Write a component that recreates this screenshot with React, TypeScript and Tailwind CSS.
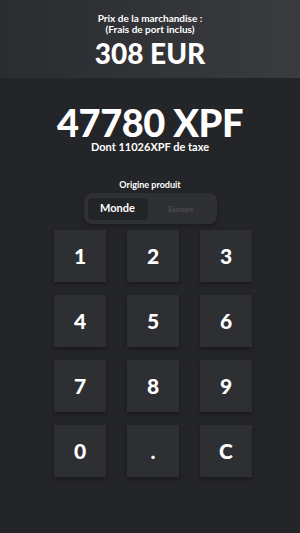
import React from "react";

const keys = ["1", "2", "3", "4", "5", "6", "7", "8", "9", "0", ".", "C"];

export default function App() {
  return (
    <div
      className="w-[300px] h-[533px] bg-[#242529] text-white overflow-hidden flex flex-col"
      style={{ fontFamily: "Lato, 'Noto Sans', sans-serif" }}
    >
      <div className="h-[78px] bg-gradient-to-r from-[#2a2c31] to-[#393b3e] flex flex-col items-center pt-[13px]">
        <div className="text-[10px] leading-[11px] font-bold">Prix de la marchandise :</div>
        <div className="text-[10px] leading-[11px] font-bold">(Frais de port inclus)</div>
        <div className="text-[28px] leading-[30px] font-black mt-[3px]">308 EUR</div>
      </div>
      <div className="flex flex-col items-center mt-[25px]">
        <div className="text-[38px] leading-[38px] font-black tracking-[-0.5px]">47780 XPF</div>
        <div className="text-[11px] leading-[12px] font-bold">Dont 11026XPF de taxe</div>
        <div className="text-[9px] leading-[10px] font-bold mt-[27px]">Origine produit</div>
        <div className="mt-[3px] w-[133px] h-[31px] rounded-[8px] bg-[#2f3034] shadow-[0_2px_4px_rgba(0,0,0,0.25)] flex items-center p-[3px]">
          <div className="w-[62px] h-[24px] rounded-[6px] bg-[#232428] border border-[#313236] flex items-center justify-center text-[11px] font-bold">
            Monde
          </div>
          <div className="flex-1 flex items-center justify-center text-[8px] font-bold text-[#4b4c50]">Europe</div>
        </div>
      </div>
      <div className="mt-[6px] pl-[6px] grid grid-cols-[52px_52px_52px] gap-x-[21px] gap-y-[13px] justify-center">
        {keys.map((k) => (
          <div
            key={k}
            className="w-[52px] h-[52px] bg-[#2e2f33] shadow-[0_2px_4px_rgba(0,0,0,0.35)] flex items-center justify-center text-[21px] font-black"
          >
            {k}
          </div>
        ))}
      </div>
    </div>
  );
}
